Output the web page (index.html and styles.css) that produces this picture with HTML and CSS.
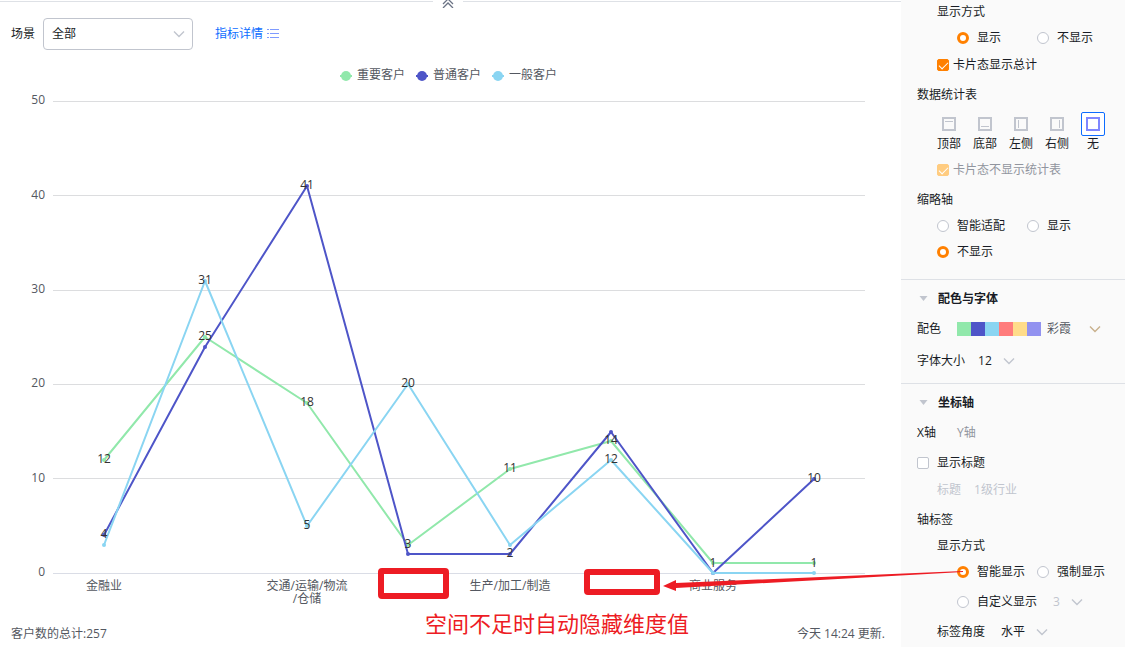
FILE: index.html
```html
<!DOCTYPE html>
<html lang="zh-CN">
<head>
  <meta charset="UTF-8" />
  <meta name="viewport" content="width=device-width, initial-scale=1.0" />
  <title>客户数统计</title>
  <link rel="stylesheet" href="styles.css">
</head>
<body>
  <svg class="defs" aria-hidden="true">
    <symbol id="chevron" viewBox="0 0 12 12"><path d="M1 3.5l5 5 5-5" fill="none" stroke="currentColor" stroke-width="1.4"/></symbol>
    <symbol id="caret" viewBox="0 0 8 6"><path d="M0 0h8L4 5z" fill="currentColor"/></symbol>
  </svg>

  <main class="main">
    <button class="collapse" type="button" aria-label="收起">
      <svg width="12" height="8" viewBox="0 0 12 8"><path d="M1 4l5-5 5 5M1 8l5-5 5 5" fill="none" stroke="#6b7385" stroke-width="1.3"/></svg>
    </button>

    <div class="filter">
      <label for="scene">场景</label>
      <span class="select select-box">
        <select id="scene"><option>全部</option></select>
        <svg class="chevron"><use href="#chevron"/></svg>
      </span>
      <a class="detail" href="#">指标详情
        <svg width="12" height="10" viewBox="0 0 12 10"><path d="M0 .5h2M0 4.5h2M0 8.500h2M3 .5h9M3 4.5h9M3 8.500h9" stroke="#7f9bff"/></svg>
      </a>
    </div>

    <svg class="chart" viewBox="0 60 901 552" role="img" aria-label="客户数折线图">
      <!-- legend -->
      <g class="legend">
        <path d="M340 76h12" stroke="#91e8ab" stroke-width="2"/><circle cx="346" cy="76" r="5" fill="#91e8ab"/>
        <text x="357" y="79">重要客户</text>
        <path d="M416 76h12" stroke="#4e55c8" stroke-width="2"/><circle cx="422" cy="76" r="5" fill="#4e55c8"/>
        <text x="433" y="79">普通客户</text>
        <path d="M492 76h12" stroke="#8ad5f2" stroke-width="2"/><circle cx="498" cy="76" r="5" fill="#8ad5f2"/>
        <text x="509" y="79">一般客户</text>
      </g>

      <!-- grid -->
      <g class="grid">
        <rect x="53" y="101" width="812" height="1"/>
        <rect x="53" y="195" width="812" height="1"/>
        <rect x="53" y="290" width="812" height="1"/>
        <rect x="53" y="384" width="812" height="1"/>
        <rect x="53" y="478" width="812" height="1"/>
        <rect class="base" x="53" y="573" width="812" height="1"/>
      </g>
      <g class="axis axis-y">
        <text x="45" y="104">50</text>
        <text x="45" y="199">40</text>
        <text x="45" y="293">30</text>
        <text x="45" y="387">20</text>
        <text x="45" y="482">10</text>
        <text x="45" y="576">0</text>
      </g>
      <g class="axis axis-x">
        <text x="104" y="590">金融业</text>
        <text x="307" y="590">交通/运输/物流</text>
        <text x="307" y="603">/仓储</text>
        <text x="510" y="590">生产/加工/制造</text>
        <text x="713" y="590">商业服务</text>
      </g>

      <!-- series -->
      <g class="line vip">
        <polyline points="104,460 205,337 307,403 408,545 510,469 611,441 713,563 814,563"/>
        <circle cx="104" cy="460" r="2"/><circle cx="205" cy="337" r="2"/><circle cx="307" cy="403" r="2"/><circle cx="408" cy="545" r="2"/>
        <circle cx="510" cy="469" r="2"/><circle cx="611" cy="441" r="2"/><circle cx="713" cy="563" r="2"/><circle cx="814" cy="563" r="2"/>
      </g>
      <g class="line normal">
        <polyline points="104,535 205,347 307,186 408,554 510,554 611,432 713,573 814,479"/>
        <circle cx="104" cy="535" r="2"/><circle cx="205" cy="347" r="2"/><circle cx="307" cy="186" r="2"/><circle cx="408" cy="554" r="2"/>
        <circle cx="510" cy="554" r="2"/><circle cx="611" cy="432" r="2"/><circle cx="713" cy="573" r="2"/><circle cx="814" cy="479" r="2"/>
      </g>
      <g class="line common">
        <polyline points="104,545 205,281 307,526 408,384 510,545 611,460 713,573 814,573"/>
        <circle cx="104" cy="545" r="2"/><circle cx="205" cy="281" r="2"/><circle cx="307" cy="526" r="2"/><circle cx="408" cy="384" r="2"/>
        <circle cx="510" cy="545" r="2"/><circle cx="611" cy="460" r="2"/><circle cx="713" cy="573" r="2"/><circle cx="814" cy="573" r="2"/>
      </g>
      <g class="values">
        <text x="104" y="463">12</text>
        <text x="104" y="538">4</text>
        <text x="205" y="340">25</text>
        <text x="205" y="284">31</text>
        <text x="307" y="189">41</text>
        <text x="307" y="406">18</text>
        <text x="307" y="529">5</text>
        <text x="408" y="387">20</text>
        <text x="408" y="548">3</text>
        <text x="510" y="472">11</text>
        <text x="510" y="557">2</text>
        <text x="611" y="444">14</text>
        <text x="611" y="463">12</text>
        <text x="713" y="567">1</text>
        <text x="814" y="567">1</text>
        <text x="814" y="482">10</text>
      </g>

      <!-- notes -->
      <g class="notes">
        <rect x="381" y="571" width="65" height="25" rx="1"/>
        <rect x="587" y="572" width="70" height="20" rx="1"/>
        <path d="M663 586l13-6v3L963 571v1L676 588v3z"/>
        <text x="425" y="632">空间不足时自动隐藏维度值</text>
      </g>
    </svg>

    <div class="footer">
      <span>客户数的总计:257</span>
      <span>今天 14:24 更新.</span>
    </div>
  </main>

  <aside class="panel">
    <section class="section first">
      <div class="row in1">显示方式</div>
      <div class="row in2 g2 cols">
        <label class="opt"><input type="radio" name="total" checked>显示</label>
        <label class="opt"><input type="radio" name="total">不显示</label>
      </div>
      <label class="row in1 g3 tight"><input type="checkbox" checked>卡片态显示总计</label>
      <div class="row g6">数据统计表</div>
      <div class="places">
        <button type="button"><span class="place"><svg viewBox="0 0 14 14"><path d="M1 1h12v12H1z"/><path class="thin" d="M3 4.5h8"/></svg></span>顶部</button>
        <button type="button"><span class="place"><svg viewBox="0 0 14 14"><path d="M1 1h12v12H1z"/><path class="thin" d="M3 9.5h8"/></svg></span>底部</button>
        <button type="button"><span class="place"><svg viewBox="0 0 14 14"><path d="M1 1h12v12H1z"/><path class="thin" d="M4.5 3v8"/></svg></span>左侧</button>
        <button type="button"><span class="place"><svg viewBox="0 0 14 14"><path d="M1 1h12v12H1z"/><path class="thin" d="M9.5 3v8"/></svg></span>右侧</button>
        <button type="button" class="active"><span class="place"><svg viewBox="0 0 14 14"><path d="M1 1h12v12H1z"/></svg></span>无</button>
      </div>
      <label class="row in1 g6 tight muted"><input type="checkbox" checked disabled>卡片态不显示统计表</label>
      <div class="row g6">缩略轴</div>
      <div class="row in1 g2 cols wide">
        <label class="opt"><input type="radio" name="zoom">智能适配</label>
        <label class="opt"><input type="radio" name="zoom">显示</label>
      </div>
      <div class="row in1 g2">
        <label class="opt"><input type="radio" name="zoom" checked>不显示</label>
      </div>
    </section>

    <section class="section">
      <h2 class="row title"><svg class="caret"><use href="#caret"/></svg>配色与字体</h2>
      <div class="row g6">
        <label class="name" for="palette">配色</label>
        <span class="swatches"><i class="c1"></i><i class="c2"></i><i class="c3"></i><i class="c4"></i><i class="c5"></i><i class="c6"></i></span>
        <span class="select palette">
          <select id="palette"><option>彩霞</option></select>
          <svg class="chevron"><use href="#chevron"/></svg>
        </span>
      </div>
      <div class="row g8 inline">
        <label for="size">字体大小</label>
        <span class="select size">
          <select id="size"><option>12</option></select>
          <svg class="chevron"><use href="#chevron"/></svg>
        </span>
      </div>
    </section>

    <section class="section last">
      <h2 class="row title"><svg class="caret"><use href="#caret"/></svg>坐标轴</h2>
      <div class="row g6 tabs">
        <button type="button" class="active">X轴</button>
        <button type="button">Y轴</button>
      </div>
      <label class="row g6 opt"><input type="checkbox">显示标题</label>
      <div class="row in1 g3 inline off">
        <label for="axisTitle">标题</label>
        <input type="text" id="axisTitle" value="1级行业" disabled>
      </div>
      <div class="row g6">轴标签</div>
      <div class="row in1 g2">显示方式</div>
      <div class="row in2 g2 cols">
        <label class="opt"><input type="radio" name="label" checked>智能显示</label>
        <label class="opt"><input type="radio" name="label">强制显示</label>
      </div>
      <div class="row in2 g6">
        <label class="opt"><input type="radio" name="label">自定义显示</label>
        <span class="select step">
          <select aria-label="间隔" disabled><option>3</option></select>
          <svg class="chevron"><use href="#chevron"/></svg>
        </span>
      </div>
      <div class="row in1 g6 angle">
        <label for="angle">标签角度</label>
        <span class="select turn">
          <select id="angle"><option>水平</option></select>
          <svg class="chevron"><use href="#chevron"/></svg>
        </span>
      </div>
    </section>
  </aside>
</body>
</html>
```
FILE: styles.css
```css
* {
  box-sizing: border-box;
}
body {
  margin: 0;
  display: flex;
  min-height: 100vh;
  background-color: #ffffff;
  color: #181c25;
  font-family: "Open Sans", "Noto Sans CJK SC", sans-serif;
  font-size: 12px;
  line-height: 24px;
}
button, input, select {
  margin: 0;
  padding: 0;
  border: none;
  background: none;
  color: inherit;
  font: inherit;
}
button {
  cursor: pointer;
}
.defs {
  position: absolute;
  width: 0;
  height: 0;
}

/* chart side */
.main {
  position: relative;
  z-index: 1;
  flex: 1;
  min-width: 0;
  margin-top: 1px;
  border-top: 1px solid #dee1e6;
}
.collapse {
  position: absolute;
  top: -2px;
  left: calc(50% - 18px);
  width: 30px;
  height: 8px;
  display: flex;
  justify-content: center;
  background-color: #ffffff;
}
.filter {
  display: flex;
  align-items: center;
  height: 58px;
  padding: 6px 11px 0;
}
.select {
  position: relative;
  display: inline-flex;
  align-items: center;
}
.select select {
  appearance: none;
  width: 100%;
  height: 24px;
  opacity: 1;
}
.chevron {
  position: absolute;
  right: 0;
  width: 12px;
  height: 12px;
  color: #c1c5ce;
  pointer-events: none;
}
.select-box {
  width: 150px;
  margin-left: 8px;
}
.select-box select {
  height: 32px;
  padding: 0 8px;
  border: 1px solid #c1c5ce;
  border-radius: 4px;
}
.select-box .chevron {
  right: 8px;
}
.detail {
  display: flex;
  align-items: center;
  gap: 4px;
  margin-left: 22px;
  color: #0c6cff;
  text-decoration: none;
}
.chart {
  display: block;
  width: 100%;
  height: auto;
  overflow: visible;
}
.legend text, .axis text {
  fill: #545861;
}
.grid rect {
  fill: #dcdddf;
}
.grid .base {
  fill: #dadde6;
}
.axis-y text {
  text-anchor: end;
}
.axis-x text, .values text {
  text-anchor: middle;
}
.values text {
  fill: #333333;
}
.line polyline {
  fill: none;
  stroke-width: 2;
  stroke-linejoin: bevel;
}
.vip { stroke: #91e8ab; fill: #91e8ab; }
.normal { stroke: #4e55c8; fill: #4e55c8; }
.common { stroke: #8ad5f2; fill: #8ad5f2; }
.line circle {
  stroke: none;
}
.notes rect {
  fill: none;
  stroke: #ed1c24;
  stroke-width: 6;
}
.notes path, .notes text {
  fill: #ed1c24;
}
.notes text {
  font-size: 22px;
}
.footer {
  display: flex;
  justify-content: space-between;
  padding: 10px 16px 0 11px;
  color: #545861;
}

/* settings panel */
.panel {
  width: 224px;
  flex-shrink: 0;
  background-color: #fafafa;
}
.section {
  padding: 7px 0 10px;
  border-bottom: 1px solid #dee1e6;
}
.section.first {
  padding: 0 0 15px;
}
.section.last {
  padding-bottom: 0;
  border-bottom: none;
}
.row {
  display: flex;
  align-items: center;
  height: 24px;
  padding-left: 16px;
}
.in1 { padding-left: 36px; }
.in2 { padding-left: 56px; }
.g2 { margin-top: 2px; }
.g3 { margin-top: 3px; }
.g6 { margin-top: 6px; }
.g8 { margin-top: 8px; }
.opt {
  display: flex;
  align-items: center;
  gap: 8px;
}
.tight {
  gap: 4px;
}
.inline {
  gap: 13px;
}
.cols .opt {
  width: 80px;
  white-space: nowrap;
}
.wide .opt {
  width: 90px;
}
.muted {
  color: #91959e;
}
.off {
  color: #c1c5ce;
}
.off input {
  width: 100px;
}
input[type="radio"], input[type="checkbox"] {
  appearance: none;
  flex-shrink: 0;
  width: 12px;
  height: 12px;
  border: 1px solid #c1c5ce;
  background-color: #ffffff;
}
input[type="radio"] {
  border-radius: 50%;
}
input[type="radio"]:checked {
  border: 3px solid #ff8000;
}
input[type="checkbox"] {
  display: flex;
  justify-content: center;
  border-radius: 2px;
}
input[type="checkbox"]:checked {
  border-color: #ff8000;
  background-color: #ff8000;
}
input[type="checkbox"]:checked::before {
  content: "";
  flex-shrink: 0;
  width: 8px;
  height: 4px;
  margin-top: 2px;
  border: solid #ffffff;
  border-width: 0 0 1px 1px;
  transform: rotate(-45deg);
}
input[type="checkbox"]:disabled {
  border-color: #ffcc80;
  background-color: #ffcc80;
}
.places {
  display: flex;
  gap: 12px;
  margin-top: 5px;
  padding-left: 36px;
}
.places button {
  display: flex;
  flex-direction: column;
  align-items: center;
  width: 24px;
  line-height: 16px;
  white-space: nowrap;
}
.place {
  display: flex;
  align-items: center;
  justify-content: center;
  width: 24px;
  height: 24px;
  border: 1px solid transparent;
  border-radius: 2px;
}
.place svg {
  width: 14px;
  height: 14px;
  fill: none;
  stroke: #c1c5ce;
  stroke-width: 2;
}
.place .thin {
  stroke-width: 1;
}
.active .place {
  border-color: #0c6cff;
  background-color: #ffffff;
}
.active .place svg {
  stroke: #7f87ff;
}
.title {
  margin: 0;
  gap: 10px;
  padding-left: 18px;
  font-size: 12px;
  font-weight: 700;
}
.caret {
  width: 9px;
  height: 6px;
  color: #c1c5ce;
}
.name {
  width: 40px;
}
.swatches {
  display: flex;
}
.swatches i {
  width: 14px;
  height: 14px;
}
.c1 { background-color: #91e8ab; }
.c2 { background-color: #4e55c8; }
.c3 { background-color: #8ad5f2; }
.c4 { background-color: #ff7c7c; }
.c5 { background-color: #ffdc8a; }
.c6 { background-color: #9292f0; }
.palette {
  width: 54px;
  margin-left: 6px;
  color: #545861;
}
.palette .chevron {
  color: #c8b08c;
}
.size {
  width: 37px;
}
.tabs button {
  width: 40px;
  text-align: left;
  color: #91959e;
}
.tabs .active {
  color: #181c25;
}
.step {
  width: 30px;
  margin-left: 16px;
  color: #c1c5ce;
}
.angle {
  gap: 16px;
}
.turn {
  width: 47px;
}
```
